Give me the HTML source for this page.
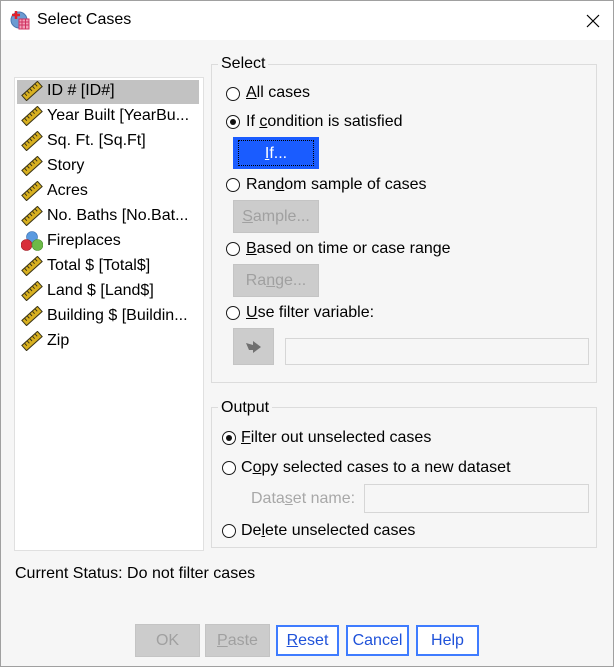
<!DOCTYPE html>
<html><head><meta charset="utf-8"><style>
*{margin:0;padding:0;box-sizing:border-box}
body{width:615px;height:670px;background:#fff;position:relative;overflow:hidden;font-family:"Liberation Sans",Arial,sans-serif;font-size:16px;color:#000}
.a{position:absolute;white-space:nowrap}
.win{position:absolute;left:0;top:0;width:614px;height:667px;border:1px solid #a0a0a0;background:#f6f6f6}
.title{position:absolute;left:0;top:0;width:612px;height:39px;background:#fff}
.list{position:absolute;left:14px;top:77px;width:190px;height:474px;background:#fff;border:1px solid #e0e0e0}
.row{position:absolute;left:2px;width:182px;height:24px}
.row span{position:absolute;left:29px;top:3px}
.row svg{position:absolute;left:3px;top:2px}
.grp{position:absolute;border:1px solid #dcdcdc}
.lbl{position:absolute;background:#f6f6f6;padding:0 3px}
.rad{position:absolute;width:14px;height:14px;border:1.3px solid #1a1a1a;border-radius:50%;background:#fff}
.rad.on::after{content:"";position:absolute;left:3px;top:3px;width:6px;height:6px;border-radius:50%;background:#111}
.btn{position:absolute;display:flex;align-items:center;justify-content:center;padding-top:1px}
.dis{background:#cccccc;color:#a0a0a0;border:1px solid #c4c4c4}
.blue{border:2px solid #3f7cff;background:#fff;color:#1f52d9}
.field{position:absolute;border:1px solid #d6d6d6;background:#f6f6f6}
u{text-decoration:underline}
</style></head><body>
<svg width="0" height="0" style="position:absolute"><defs><g id="rl"><g transform="rotate(-42 11 10)"><rect x="0.5" y="6.5" width="21" height="7" fill="#d8b020" stroke="#3a3418"/><path d="M4 7v3M7.5 7v3M11 7v3M14.5 7v3M18 7v3" stroke="#3a3418"/></g></g></defs></svg>
<div class="win">
<div class="title">
<svg class="a" style="left:9px;top:9px" width="20" height="20" viewBox="0 0 20 20"><circle cx="9" cy="10" r="8" fill="#6c9bd2"/><circle cx="9" cy="10" r="8" fill="none" stroke="#4a78b0"/><rect x="9" y="9" width="10" height="10" fill="#f2a0b8" stroke="#d03060"/><path d="M9 12h10M9 15h10M12 9v10M15.5 9v10" stroke="#d03060" stroke-width="1"/><path d="M2 5h8M6 1v8" stroke="#e0202a" stroke-width="2.5"/></svg>
<span class="a" style="left:36px;top:10px;font-size:16px">Select Cases</span>
<svg class="a" style="left:585px;top:13px" width="14" height="14" viewBox="0 0 14 14"><path d="M1 1L13 13M13 1L1 13" stroke="#000" stroke-width="1.2"/></svg>
</div>
</div>
<div class="list">
<div class="row" style="top:2px;background:#c2c2c2"></div>
</div>
<div class="a" style="left:16px;top:79px;width:185px">
<div class="row" style="top:0"><svg width="22" height="20"><use href="#rl"/></svg><span>ID # [ID#]</span></div>
<div class="row" style="top:25px"><svg width="22" height="20"><use href="#rl"/></svg><span>Year Built [YearBu...</span></div>
<div class="row" style="top:50px"><svg width="22" height="20"><use href="#rl"/></svg><span>Sq. Ft. [Sq.Ft]</span></div>
<div class="row" style="top:75px"><svg width="22" height="20"><use href="#rl"/></svg><span>Story</span></div>
<div class="row" style="top:100px"><svg width="22" height="20"><use href="#rl"/></svg><span>Acres</span></div>
<div class="row" style="top:125px"><svg width="22" height="20"><use href="#rl"/></svg><span>No. Baths [No.Bat...</span></div>
<div class="row" style="top:150px"><svg width="22" height="20" viewBox="0 0 22 20"><circle cx="11" cy="6" r="5.5" fill="#5a9ae0" stroke="#3a70b0" stroke-width=".6"/><circle cx="5.5" cy="14" r="5.5" fill="#d8303a" stroke="#a02028" stroke-width=".6"/><circle cx="16.5" cy="14" r="5.5" fill="#6cba48" stroke="#4a9030" stroke-width=".6"/></svg><span>Fireplaces</span></div>
<div class="row" style="top:175px"><svg width="22" height="20"><use href="#rl"/></svg><span>Total $ [Total$]</span></div>
<div class="row" style="top:200px"><svg width="22" height="20"><use href="#rl"/></svg><span>Land $ [Land$]</span></div>
<div class="row" style="top:225px"><svg width="22" height="20"><use href="#rl"/></svg><span>Building $ [Buildin...</span></div>
<div class="row" style="top:250px"><svg width="22" height="20"><use href="#rl"/></svg><span>Zip</span></div>
</div>

<div class="grp" style="left:211px;top:64px;width:386px;height:319px"></div>
<span class="lbl a" style="left:218px;top:55px">Select</span>
<div class="rad" style="left:226px;top:87px"></div><span class="a" style="left:246px;top:84px"><u>A</u>ll cases</span>
<div class="rad on" style="left:226px;top:115px"></div><span class="a" style="left:246px;top:113px">If <u>c</u>ondition is satisfied</span>
<div class="btn" style="left:233px;top:137px;width:86px;height:32px;background:#1a5cff;color:#fff"><div style="position:absolute;left:5px;top:3px;right:5px;bottom:3px;border:1px dotted #000"></div><u>I</u>f...</div>
<div class="rad" style="left:226px;top:178px"></div><span class="a" style="left:246px;top:176px">Ran<u>d</u>om sample of cases</span>
<div class="btn dis" style="left:233px;top:200px;width:86px;height:33px"><u>S</u>ample...</div>
<div class="rad" style="left:226px;top:242px"></div><span class="a" style="left:246px;top:240px"><u>B</u>ased on time or case range</span>
<div class="btn dis" style="left:233px;top:264px;width:86px;height:33px">Ra<u>n</u>ge...</div>
<div class="rad" style="left:226px;top:306px"></div><span class="a" style="left:246px;top:304px"><u>U</u>se filter variable:</span>
<div class="btn dis" style="left:233px;top:328px;width:41px;height:37px"><svg width="18" height="16" viewBox="0 0 18 16"><path d="M1 4 L8 6 L8 2 L16 8 L8 14 L8 11 L4 11 Z" fill="#707070"/></svg></div>
<div class="field" style="left:285px;top:338px;width:304px;height:27px"></div>

<div class="grp" style="left:211px;top:407px;width:386px;height:141px"></div>
<span class="lbl a" style="left:218px;top:399px">Output</span>
<div class="rad on" style="left:222px;top:431px"></div><span class="a" style="left:241px;top:429px"><u>F</u>ilter out unselected cases</span>
<div class="rad" style="left:222px;top:461px"></div><span class="a" style="left:241px;top:459px">C<u>o</u>py selected cases to a new dataset</span>
<span class="a" style="left:251px;top:490px;color:#a8a8a8">Data<u>s</u>et name:</span>
<div class="field" style="left:364px;top:484px;width:225px;height:29px"></div>
<div class="rad" style="left:222px;top:524px"></div><span class="a" style="left:241px;top:522px">De<u>l</u>ete unselected cases</span>

<span class="a" style="left:15px;top:565px">Current Status: Do not filter cases</span>

<div class="btn dis" style="left:135px;top:624px;width:65px;height:33px">OK</div>
<div class="btn dis" style="left:205px;top:624px;width:65px;height:33px"><u>P</u>aste</div>
<div class="btn blue" style="left:276px;top:625px;width:63px;height:31px"><u>R</u>eset</div>
<div class="btn blue" style="left:346px;top:625px;width:63px;height:31px">Cancel</div>
<div class="btn blue" style="left:416px;top:625px;width:63px;height:31px">Help</div>
</body></html>
